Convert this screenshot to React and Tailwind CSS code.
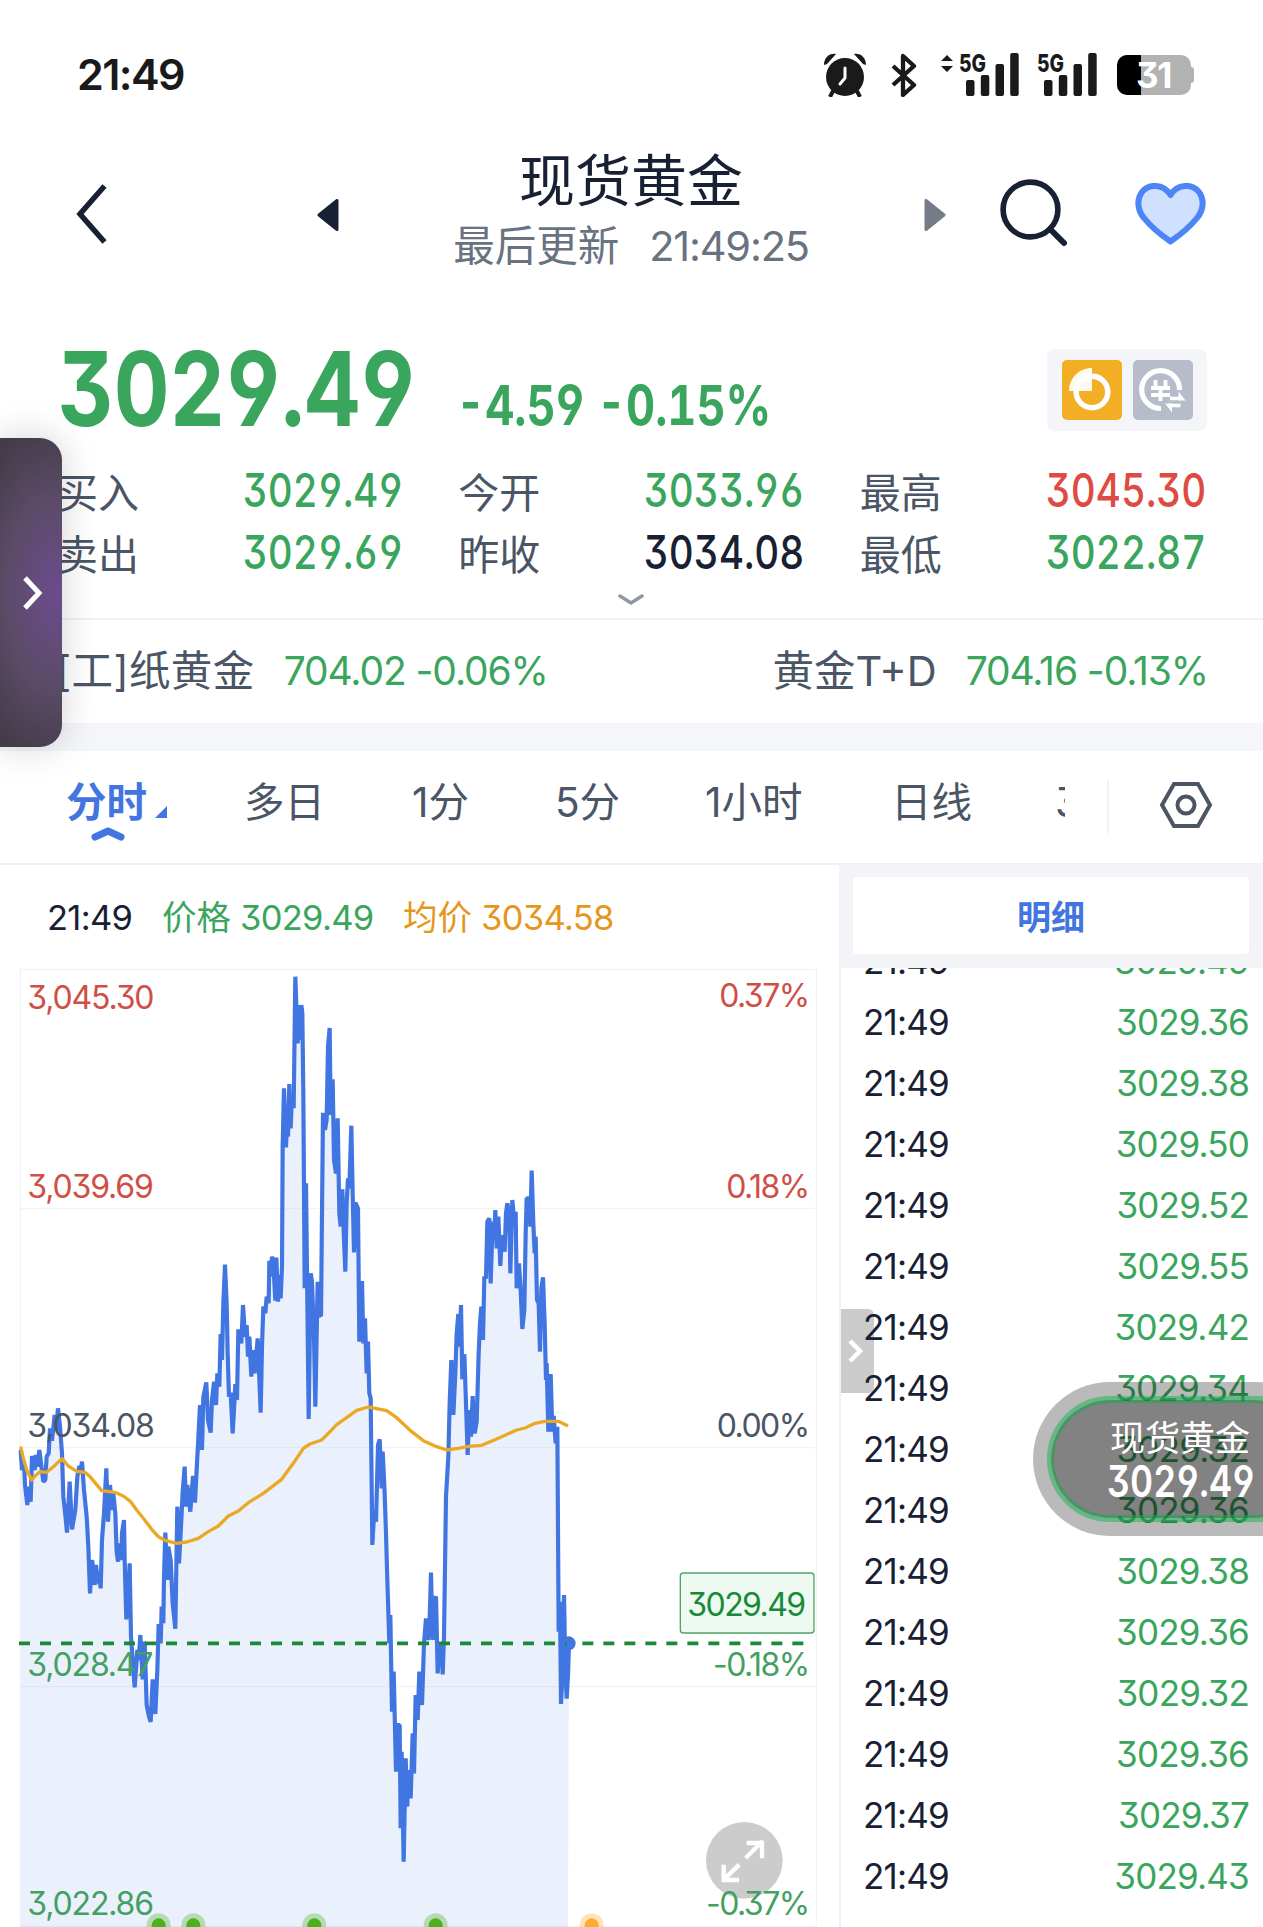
import { Fragment } from 'react';
import clsx from 'clsx';

const GREEN = 'text-[#3aa55c]';
const RED = 'text-[#dd4b42]';
const INK = 'text-[#182033]';

// narrow numerals used for the quote block
const DIN = "inline-block whitespace-nowrap [font-feature-settings:'tnum','cv03','cv04','cv09']";

const QUOTES = [
  { label: '买入', value: '3029.49', tone: GREEN },
  { label: '今开', value: '3033.96', tone: GREEN },
  { label: '最高', value: '3045.30', tone: RED },
  { label: '卖出', value: '3029.69', tone: GREEN },
  { label: '昨收', value: '3034.08', tone: INK },
  { label: '最低', value: '3022.87', tone: GREEN }
];

const TICKS = [
  '3029.49', '3029.36', '3029.38', '3029.50', '3029.52', '3029.55', '3029.42', '3029.34',
  '3029.32', '3029.36', '3029.38', '3029.36', '3029.32', '3029.36', '3029.37', '3029.43'
];

// Chart space: 3 units per pixel, x 0..2517, y 24..2901
const PRICE_POINTS = `
62,1470 66,1530 72,1505 75,1575 82,1635 86,1580 92,1625 96,1488 104,1530 107,1485 112,1520 118,1470
122,1500 130,1565 136,1560 140,1490 146,1480 150,1405 156,1442 164,1365 168,1410 174,1345 180,1400
186,1480 190,1610 196,1665 201,1718 209,1565 216,1708 226,1650 232,1550 238,1518 241,1540 246,1505
252,1590 260,1670 265,1760 270,1900 276,1800 282,1840 284,1875 288,1815 294,1870 298,1850 302,1885
306,1740 312,1660 319,1525 324,1685 330,1575 336,1650 340,1600 346,1660 350,1775 354,1805 358,1750
364,1800 366,1720 372,1680 374,1800 379,1978 384,1910 389,1810 393,2030 398,2100 404,2182 412,2070
416,2100 421,2025 428,2158 434,2045 440,2235 447,2270 452,2286 458,2158 462,2210 466,2262 472,2130
476,1992 482,2050 485,1940 490,1990 492,1850 496,1718 502,1860 505,1760 512,1800 518,1930 526,2006
532,1640 537,1810 544,1680 548,1595 554,1520 558,1640 562,1575 571,1655 579,1548 585,1628 592,1490
594,1455 600,1335 606,1470 610,1310 619,1267 624,1380 632,1418 636,1320 642,1265 648,1335 652,1240
658,1280 662,1122 666,1200 670,1030 675,914 680,1030 683,1180 687,1310 692,1298 698,1420 702,1350
706,1272 711,1320 715,1108 724,1150 729,1035 735,1130 740,1095 744,1190 748,1130 754,1250 758,1170
764,1240 773,1135 777,1230 782,1358 786,1160 790,1040 796,1060 800,1010 806,1030 808,902 812,950
816,890 820,910 826,1022 829,893 834,1025 838,945 842,1015 846,920 848,560 852,385 858,562 862,470
864,530 868,372 872,505 876,405 881,445 886,50 893,250 898,135 901,240 904,135 907,160 910,400
914,985 918,670 926,1377 932,940 936,965 942,1130 946,1340 953,965 957,1065 963,1068 969,458
975,510 980,480 984,260 989,204 992,465 998,358 1002,600 1008,640 1013,475 1018,760 1022,800
1027,688 1032,840 1036,935 1040,730 1044,655 1048,685 1054,497 1058,700 1062,877 1066,728 1074,745
1078,1145 1086,963 1090,1150 1095,1075 1100,1240 1104,1145 1108,1300 1112,1315 1117,1755 1123,1650
1128,1685 1134,1455 1139,1438 1145,1585 1148,1475 1154,1600 1158,1720 1162,1860 1168,2050 1171,1965
1176,2255 1181,2135 1188,2435 1192,2295 1199,2295 1202,2605 1205,2375 1211,2705 1217,2395 1222,2540
1224,2430 1232,2515 1238,2320 1242,2440 1247,2205 1253,2280 1258,2135 1266,2235 1272,2050 1278,1975
1284,2040 1288,2010 1293,1838 1298,2040 1302,1920 1308,1910 1313,2140 1318,2060 1324,2050 1328,2143
1332,2030 1338,1610 1345,1490 1349,1330 1354,1200 1360,1365 1366,1240 1370,1120 1375,1062 1379,1160
1383,1035 1387,1258 1393,1182 1397,1300 1403,1485 1408,1350 1413,1430 1418,1308 1424,1420 1430,1385
1436,1180 1440,1090 1444,1040 1449,1140 1453,950 1458,955 1462,785 1468,775 1472,970 1478,785
1482,840 1486,750 1490,865 1495,770 1501,918 1506,825 1514,875 1518,760 1522,730 1528,760 1531,940
1537,720 1542,780 1547,755 1550,985 1557,910 1562,990 1567,1107 1573,1050 1577,820 1580,715 1587,715
1591,800 1595,632 1600,790 1604,880 1607,830 1611,1020 1616,1030 1620,1175 1624,985 1629,952
1634,1090 1638,1260 1640,1210 1645,1415 1652,1242 1657,1415 1661,1368 1667,1450 1672,1400 1676,2015
1680,1925 1683,2232 1689,2110 1692,1905 1696,2130 1700,2216 1704,2145 1707,2050`;

const AVERAGE_POINTS = `
62,1460 70,1495 80,1530 95,1560 108,1545 120,1535 140,1537 160,1520 186,1496 205,1518 230,1534
255,1537 270,1550 305,1592 345,1597 370,1608 392,1625 410,1650 430,1675 455,1708 475,1730 495,1741
530,1750 560,1746 595,1735 625,1715 655,1698 685,1668 715,1653 745,1628 790,1600 845,1558 880,1510
910,1465 930,1452 965,1440 990,1415 1010,1394 1040,1373 1070,1351 1105,1341 1130,1346 1160,1352
1190,1373 1235,1415 1270,1442 1310,1460 1340,1470 1375,1465 1405,1459 1445,1456 1490,1437 1550,1410
1575,1404 1605,1390 1635,1384 1675,1384 1704,1398`;

const LEVELS = [
  { price: '3,045.30', percent: '0.37%', y: 147, py: 140, fill: '#cf4f46' },
  { price: '3,039.69', percent: '0.18%', y: 713, py: 713, fill: '#cf4f46' },
  { price: '3,034.08', percent: '0.00%', y: 1430, py: 1430, fill: '#4a5565' },
  { price: '3,028.47', percent: '-0.18%', y: 2147, py: 2147, fill: '#449f62' },
  { price: '3,022.86', percent: '-0.37%', y: 2864, py: 2864, fill: '#449f62' }
];

const EVENTS = [
  { x: 476, fill: '#4caf1d' },
  { x: 580, fill: '#4caf1d' },
  { x: 943, fill: '#4caf1d' },
  { x: 1307, fill: '#4caf1d' },
  { x: 1775, fill: '#ffaa33' }
];

function Signal({ arrows }) {
  return (
    <svg className="h-11 w-[78px] overflow-visible" viewBox="0 0 78 44" fill="#1a1a1a">
      {arrows && <path d="M6 2l6 6H0zM6 19l6-6H0z" />}
      <text
        x="18"
        y="19"
        fontSize="25"
        fontWeight="800"
        fontFamily="Inter, sans-serif"
        textLength="27"
        lengthAdjust="spacingAndGlyphs"
      >
        5G
      </text>
      <rect x="25" y="27" width="8.500" height="16" rx="2" />
      <rect x="39.800" y="22" width="8.500" height="21" rx="2" />
      <rect x="54.500" y="11" width="8.500" height="32" rx="2" />
      <rect x="69.200" y="0" width="8.500" height="43" rx="2" />
    </svg>
  );
}

function StatusBar() {
  return (
    <div className="flex h-[149px] items-center justify-between pl-[77px] pr-[69px]">
      <span className="text-[43px] leading-none font-semibold tracking-[-1.6px] text-[#1a1a1a]">21:49</span>
      <div className="flex items-center">
        <svg className="h-11 w-11" viewBox="0 0 44 44">
          <circle cx="22" cy="24" r="19" fill="#1a1a1a" />
          <path d="M1 12C1 5 6 0 13 1L4 11zM43 12C43 5 38 0 31 1l9 10z" fill="#1a1a1a" />
          <path d="M10 38l-3 6M34 38l3 6" stroke="#1a1a1a" strokeWidth="4" />
          <path d="M22 15v10l-5 6" fill="none" stroke="#fff" strokeWidth="3" strokeLinecap="round" />
        </svg>
        <svg className="ml-6 h-[44px] w-[26px]" viewBox="0 0 26 44" fill="none" stroke="#1a1a1a" strokeWidth="4.300">
          <path d="M2 13l21 19-11 10V3l11 10L2 32" strokeLinejoin="round" />
        </svg>
        <div className="ml-6 flex">
          <Signal arrows />
          <Signal />
        </div>
        <div className="relative ml-5 flex h-10 w-[77px] items-center">
          <div className="flex h-10 w-[74px] overflow-hidden rounded-[10px] bg-[#b2b2b2]">
            <div className="w-6 bg-black" />
          </div>
          <div className="h-4 w-[3px] rounded-r-sm bg-[#b2b2b2]" />
          <span className="absolute left-[19px] pt-[2px] text-[35px] leading-none font-bold tracking-[-1.5px] text-white">31</span>
        </div>
      </div>
    </div>
  );
}

function TitleBar() {
  return (
    <div className="flex h-[177px] items-start pt-[1px] pl-[76px]">
      <svg className="mt-[33px] h-[62px] w-8" viewBox="0 0 32 62" fill="none" stroke="#182033" strokeWidth="5.500">
        <path d="M28.500 3L4 31l24.500 28" />
      </svg>
      <svg className="mt-[49px] ml-[209px] h-8 w-[22px]" viewBox="0 0 22 32">
        <path d="M20 1.500v29L2 16z" fill="#182033" stroke="#182033" strokeWidth="3" strokeLinejoin="round" />
      </svg>
      <div className="flex w-[584px] flex-col items-center">
        <h1 className={clsx('text-[56px] leading-[62px]', INK)}>现货黄金</h1>
        <p className="flex gap-[30px] text-[41.5px] leading-[68px] text-[#69737f]">
          <span>最后更新</span>
          <span className="tracking-[-1.2px]">21:49:25</span>
        </p>
      </div>
      <svg className="mt-[49px] ml-[1px] h-8 w-[22px]" viewBox="0 0 22 32">
        <path d="M2 1.500v29L20 16z" fill="#757c88" stroke="#757c88" strokeWidth="3" strokeLinejoin="round" />
      </svg>
      <svg className="mt-[28px] ml-[53px] h-[70px] w-[70px]" viewBox="0 0 70 70" fill="none" stroke="#182033">
        <circle cx="31.500" cy="31.500" r="27.400" strokeWidth="5.600" />
        <path d="M51 51l14 14" strokeWidth="6" strokeLinecap="round" />
      </svg>
      <svg className="mt-[33px] ml-[66px] h-[62px] w-[71px]" viewBox="0 0 71 62">
        <path
          d="M35.500 12C29 1 14 0 7 9C1 17 3 28 9 35C17 45 26 52 35.500 58.500C45 52 54 45 62 35C68 28 70 17 64 9C57 0 42 1 35.500 12Z"
          fill="#d0e0ff"
          stroke="#4c86f5"
          strokeWidth="6"
          strokeLinejoin="round"
        />
      </svg>
    </div>
  );
}

function Badges() {
  return (
    <div className="flex h-[82px] w-[160px] items-center justify-center gap-[11px] rounded-lg bg-[#f4f5f9]">
      <svg className="h-[60px] w-[60px]" viewBox="0 0 60 60">
        <rect width="60" height="60" rx="5" fill="#f2ae24" />
        <circle cx="30" cy="32" r="15.800" fill="none" stroke="#fff" strokeWidth="5.500" />
        <path d="M30 8v23H7C7 18 17 8 30 8z" fill="#fff" fillOpacity=".92" />
      </svg>
      <svg className="h-[60px] w-[60px]" viewBox="0 0 60 60" fill="none" stroke="#fff">
        <rect width="60" height="60" rx="5" fill="#b6bcc9" stroke="none" />
        <path d="M46.500 30A18.900 18.900 0 1 0 28 48.500" strokeWidth="5.200" />
        <path d="M22.500 20v7M32.500 20v7M27.500 27v14M18 28h19M18 35h19" strokeWidth="3.800" />
        <path d="M37 38.500h12M35 45.500h12.500" strokeWidth="3.600" />
        <path d="M45.500 31.500l7 9h-7zM39 43.500v9l-7-9z" fill="#fff" stroke="none" />
      </svg>
    </div>
  );
}

function QuoteBlock() {
  return (
    <section className="h-[292px] px-[58px]">
      <div className="flex h-[124px] items-start">
        <div className={clsx('w-[400px] pt-[13px] text-[103px] leading-[100px] font-bold', GREEN)}>
          <span className={clsx(DIN, 'origin-left scale-x-[0.838]')}>3029.49</span>
        </div>
        <div className={clsx('flex-1 pt-[49px] text-[55px] leading-[60px] font-bold', GREEN)}>
          <span className={clsx(DIN, '-ml-[2px] origin-left scale-x-[0.82]')}>-4.59 -0.15%</span>
        </div>
        <div className="-mr-[2px] pt-[23px]">
          <Badges />
        </div>
      </div>
      <div className="-mr-[1px] mt-[9px] grid grid-cols-3 gap-x-14">
        {QUOTES.map((q) => (
          <div key={q.label} className="flex h-[62px] items-center justify-between">
            <span className="-ml-[1px] pt-[6px] text-[41px] leading-none text-[#4a5565]">{q.label}</span>
            <span className={clsx(DIN, 'origin-right scale-x-[0.83] text-[46.5px] leading-none font-medium', q.tone)}>
              {q.value}
            </span>
          </div>
        ))}
      </div>
      <svg className="mx-auto mt-[11px] h-3 w-7" viewBox="0 0 28 12" fill="none" stroke="#8e97a3" strokeWidth="3.500">
        <path d="M2 2l11 7 11-7" strokeLinecap="round" />
      </svg>
    </section>
  );
}

function RelatedRow() {
  return (
    <div className="flex h-[105px] items-center justify-between border-t-2 border-[#f1f1f3] pr-[55px] pl-[56px] text-[41.5px] leading-none text-[#4a5565]">
      <div className="flex items-center gap-[29px]">
        <span className="tracking-[0.400px]">[工]纸黄金</span>
        <span className={clsx('-mt-[2px] text-[39px] tracking-[-1.100px]', GREEN)}>704.02 -0.06%</span>
      </div>
      <div className="flex items-center gap-[29px]">
        <span>黄金T+D</span>
        <span className={clsx('-mt-[2px] text-[39px] tracking-[-1.100px]', GREEN)}>704.16 -0.13%</span>
      </div>
    </div>
  );
}

function PeriodTabs() {
  return (
    <nav className="flex h-[114px] items-start border-b-2 border-[#f1f1f3] text-[40.500px] leading-[48px] text-[#4a5565]">
      <div className="flex w-[1065px] overflow-hidden pt-[28px] pl-[66px] whitespace-nowrap">
        <div className="flex w-[178px] shrink-0 flex-col font-bold text-[#4375e0]">
          <div className="flex">
            分时
            <svg className="mt-[27px] ml-2 h-3 w-3" viewBox="0 0 12 12">
              <path d="M12 0v12H0z" fill="#4375e0" />
            </svg>
          </div>
          <svg className="-mt-[1px] ml-6 h-4 w-[36px]" viewBox="0 0 36 16" fill="none" stroke="#4375e0" strokeWidth="7">
            <path d="M5 11l13-6 13 6" strokeLinecap="round" strokeLinejoin="round" />
          </svg>
        </div>
        <span className="w-[168px] shrink-0">多日</span>
        <span className="w-[143px] shrink-0">1分</span>
        <span className="w-[150px] shrink-0">5分</span>
        <span className="w-[186px] shrink-0">1小时</span>
        <span className="w-[164px] shrink-0">日线</span>
        <span className="shrink-0">3分</span>
      </div>
      <div className="mt-[29px] ml-[42px] h-[53px] w-[2px] bg-[#eff0f2]" />
      <svg className="mt-[30px] ml-[50px] h-[48px] w-[54px]" viewBox="0 0 54 48" fill="none" stroke="#4d5563">
        <path d="M15 3h24l12 21-12 21H15L3 24z" strokeWidth="4" />
        <circle cx="27" cy="24" r="8.500" strokeWidth="4" />
      </svg>
    </nav>
  );
}

function MinuteChart() {
  return (
    <svg
      className="block h-[959px] w-[839px] [font-feature-settings:'cv09']"
      viewBox="0 24 2517 2877"
      fontFamily="Inter, sans-serif"
      fontSize="96"
    >
      <g fill="none" stroke="#f1f1f3" strokeWidth="3">
        <rect x="61" y="28" width="2388" height="2871" />
        <path d="M61 745H2449M61 1463H2449M61 2180H2449" />
      </g>
      <polygon points={`${PRICE_POINTS} 1704,2901 62,2901`} fill="#3f74e0" fillOpacity=".1" />
      <polyline points={PRICE_POINTS} fill="none" stroke="#4175e2" strokeWidth="12.500" strokeLinejoin="bevel" />
      <polyline points={AVERAGE_POINTS} fill="none" stroke="#eaa925" strokeWidth="10" strokeLinejoin="round" />
      <circle cx="1706" cy="2050" r="21" fill="#4175e2" />
      <path d="M57 2050H1700M1747 2050H2430" stroke="#1a8a38" strokeWidth="11" strokeDasharray="33 30" />

      <circle cx="2233" cy="2701" r="115" fill="#000" fillOpacity=".2" />
      <g fill="none" stroke="#fff" strokeWidth="13">
        <path d="M2237 2694l51-51M2240 2649h46v46M2218 2714l-47 45M2171 2714v46h46" />
      </g>

      {LEVELS.map((level) => (
        <g key={level.price} fill={level.fill}>
          <text x="82" y={level.y} letterSpacing="-3.500">{level.price}</text>
          <text x="2426" y={level.py} textAnchor="end" letterSpacing="-4.600">{level.percent}</text>
        </g>
      ))}

      <rect x="2041" y="1839" width="401" height="180" rx="9" fill="#edf9f1" stroke="#4fa468" strokeWidth="4" />
      <text x="2062" y="1967" fill="#178a38" letterSpacing="-4.800">3029.49</text>

      {EVENTS.map((e) => (
        <Fragment key={e.x}>
          <circle cx={e.x} cy="2896" r="36" fill={e.fill} fillOpacity=".33" />
          <circle cx={e.x} cy="2896" r="21" fill={e.fill} />
        </Fragment>
      ))}
    </svg>
  );
}

function ChartPanel() {
  return (
    <section className="w-[839px]">
      <div className="flex h-[103px] items-center pt-[3px] pl-[47px] text-[34.5px] leading-none tracking-[-0.700px] whitespace-nowrap">
        <span className={clsx('w-[115px]', INK)}>21:49</span>
        <span className={clsx('w-[241px]', GREEN)}>
          <span className="tracking-normal">价格</span> 3029.49
        </span>
        <span className="text-[#e5961c]">
          <span className="tracking-normal">均价</span> 3034.58
        </span>
      </div>
      <MinuteChart />
    </section>
  );
}

function TickPanel() {
  return (
    <section className="flex h-[1062px] flex-1 flex-col">
      <div className="h-[103px] bg-[#f3f4f8] px-[14px] pt-3">
        <div className="flex h-[77px] items-center justify-center rounded bg-white pt-[4px] text-[34px] leading-none font-bold text-[#4375e0]">
          明细
        </div>
      </div>
      <div className="relative flex-1 overflow-hidden border-l-2 border-[#f1f1f3]">
        <div className="absolute top-[341px] left-0 flex h-[84px] w-[33px] items-center rounded-r-md bg-[#cbcbcb] pl-[7px]">
          <svg className="h-6 w-4" viewBox="0 0 16 24" fill="none" stroke="#fff" strokeWidth="4.500">
            <path d="M2 2l10 10L2 22" />
          </svg>
        </div>
        <div className="relative -mt-[37px]">
          {TICKS.map((price, i) => (
            <div key={i} className="flex h-[61px] items-center justify-between pr-[14px] pl-[22px] text-[35px] leading-none tracking-[-0.800px]">
              <span className={INK}>21:49</span>
              <span className={GREEN}>{price}</span>
            </div>
          ))}
        </div>
      </div>
    </section>
  );
}

export default function App() {
  return (
    <main className="relative h-[1927px] w-[1263px] overflow-hidden bg-white font-['Inter','Noto_Sans_CJK_SC',sans-serif] font-normal [font-feature-settings:'cv09']">
      <StatusBar />
      <TitleBar />
      <QuoteBlock />
      <RelatedRow />
      <div className="h-7 bg-[#f5f6fa]" />
      <PeriodTabs />
      <div className="flex">
        <ChartPanel />
        <TickPanel />
      </div>

      {/* side drawer handle */}
      <div className="absolute top-[438px] left-0 flex h-[309px] w-[62px] items-center rounded-r-[22px] bg-[radial-gradient(ellipse_90px_170px_at_55px_155px,#6b4c8c,#5b4b68_55%,#443d49)] pl-[22px] shadow-[0_0_36px_rgba(0,0,0,0.18)]">
        <svg className="h-[34px] w-[22px]" viewBox="0 0 22 34" fill="none" stroke="#fff" strokeWidth="5">
          <path d="M3 2l14 15L3 32" />
        </svg>
      </div>

      {/* floating quote */}
      <div className="absolute top-[1382px] left-[1033px] h-[154px] w-[300px] rounded-full bg-black/27 p-[14px]">
        <div className="h-full rounded-full border-4 border-[#1fb455]/55">
          <div className="flex h-full flex-col rounded-full border-[3px] border-[#1fa050]/60 bg-black/30 pt-[14px] pl-[56px] whitespace-nowrap text-white">
            <span className="text-[35px] leading-[42px]">现货黄金</span>
            <span className={clsx(DIN, '-ml-[3px] origin-left scale-x-[0.82] text-[43.500px] leading-[44px] font-semibold')}>3029.49</span>
          </div>
        </div>
      </div>
    </main>
  );
}
